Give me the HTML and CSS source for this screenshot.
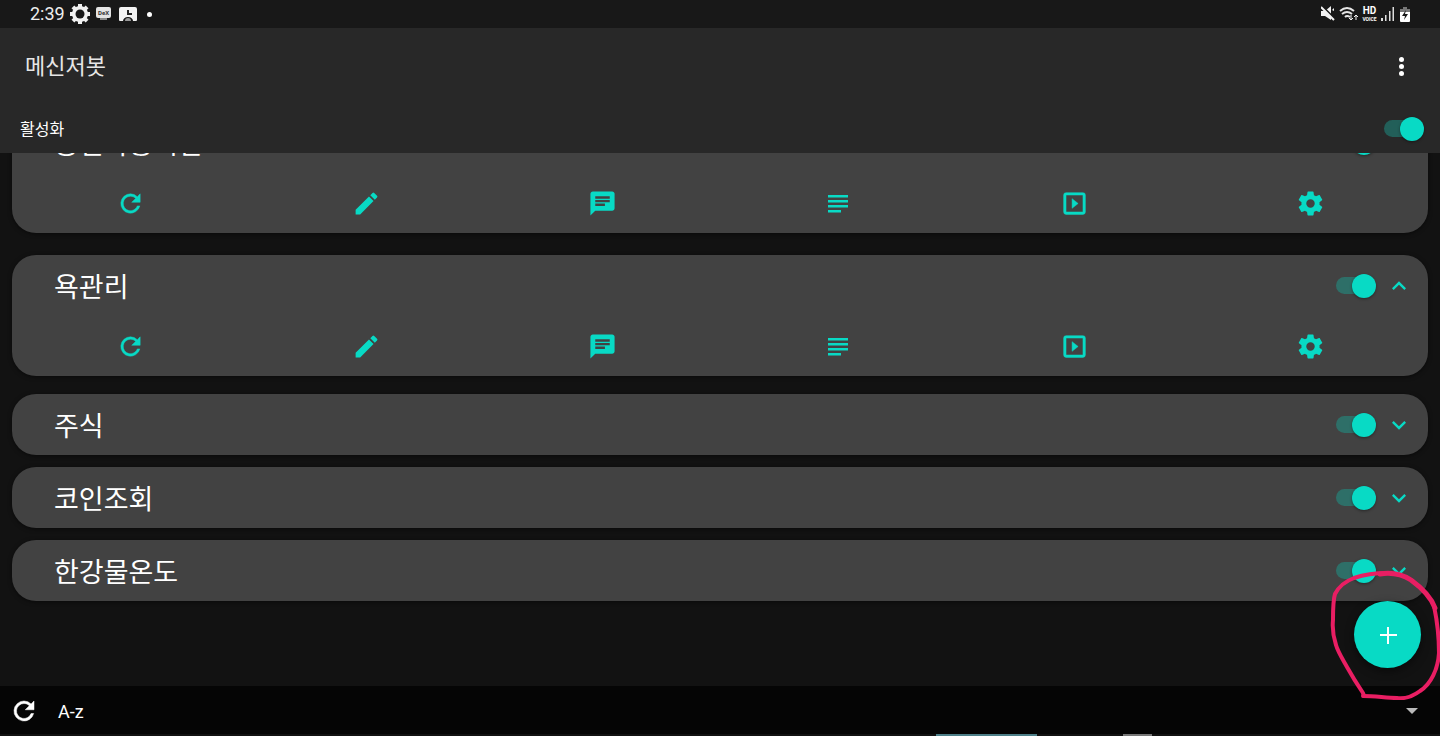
FILE: index.html
```
<!DOCTYPE html>
<html lang="ko">
<head>
  <meta charset="UTF-8" />
  <meta name="viewport" content="width=device-width, initial-scale=1.0"/>
  <title>메신저봇</title>
  <link rel="stylesheet" href="styles.css">
</head>
<body>
  <svg class="defs" aria-hidden="true">
    <symbol id="refresh" viewBox="0 0 24 24"><path d="M17.65 6.35A7.96 7.96 0 0 0 12 4a8 8 0 1 0 7.73 10h-2.08A6 6 0 1 1 12 6c1.66 0 3.14.69 4.22 1.78L13 11h7V4z" stroke="currentColor" stroke-width=".4"/></symbol>
    <symbol id="edit" viewBox="0 0 24 24"><path d="M3 17.25V21h3.75L17.81 9.94l-3.75-3.75zM20.71 7.04a1 1 0 0 0 0-1.41l-2.34-2.34a1 1 0 0 0-1.41 0l-1.83 1.83 3.75 3.75z"/></symbol>
    <symbol id="chat" viewBox="0 0 24 24"><path d="M20 2H4c-1.1 0-1.99.9-1.99 2L2 22l4-4h14c1.1 0 2-.9 2-2V4c0-1.1-.9-2-2-2zM6 9h12v2H6zm8 5H6v-2h8zm4-6H6V6h12z"/></symbol>
    <symbol id="log" viewBox="0 0 24 24"><path d="M2 4h20v2.500H2zm0 5h20v2.500H2zm0 5h20v2.500H2zm0 5h13v2.500H2z"/></symbol>
    <symbol id="run" viewBox="0 0 24 24"><path d="M10 8v8l5-4zm9-5H5a2 2 0 0 0-2 2v14a2 2 0 0 0 2 2h14a2 2 0 0 0 2-2V5a2 2 0 0 0-2-2zm0 16H5V5h14z" stroke="currentColor" stroke-width=".4"/></symbol>
    <symbol id="gear" viewBox="0 0 24 24"><path d="M19.43 12.98c.04-.32.07-.64.07-.98s-.03-.66-.07-.98l2.11-1.65c.19-.15.24-.42.12-.64l-2-3.46c-.12-.22-.39-.3-.61-.22l-2.49 1c-.52-.4-1.08-.73-1.69-.98l-.38-2.65A.49.49 0 0 0 14 2h-4c-.25 0-.46.18-.49.42l-.38 2.65c-.61.25-1.17.59-1.69.98l-2.49-1c-.23-.09-.49 0-.61.22l-2 3.46c-.13.22-.07.49.12.64l2.11 1.65c-.04.32-.07.65-.07.98s.03.66.07.98l-2.11 1.65c-.19.15-.24.42-.12.64l2 3.46c.12.22.39.3.61.22l2.49-1c.52.4 1.08.73 1.69.98l.38 2.65c.03.24.24.42.49.42h4c.25 0 .46-.18.49-.42l.38-2.65c.61-.25 1.17-.59 1.69-.98l2.49 1c.23.09.49 0 .61-.22l2-3.46c.12-.22.07-.49-.12-.64zM12 15.5a3.5 3.5 0 1 1 0-7 3.5 3.5 0 0 1 0 7z"/></symbol>
    <symbol id="down" viewBox="0 0 24 24"><path d="M7.41 8.59 12 13.17l4.59-4.58L18 10l-6 6-6-6z"/></symbol>
    <symbol id="up" viewBox="0 0 24 24"><path d="M7.41 15.41 12 10.83l4.59 4.58L18 14l-6-6-6 6z"/></symbol>
  </svg>

  <div class="status-bar">
    <span class="clock">2:39</span>
    <svg class="st-gear" viewBox="0 0 20 20">
      <g fill="#f2f2f2"><path d="M8 0h4v20H8z"/><path d="M8 0h4v20H8z" transform="rotate(45 10 10)"/><path d="M8 0h4v20H8z" transform="rotate(90 10 10)"/><path d="M8 0h4v20H8z" transform="rotate(135 10 10)"/><circle cx="10" cy="10" r="8"/></g>
      <circle cx="10" cy="10" r="4.500" fill="#181818"/>
    </svg>
    <svg class="st-dex" viewBox="0 0 16 14">
      <rect x="0" y="0" width="15" height="11" rx="2" fill="#e4e4e4"/>
      <path d="M4 11h7v2H4z" fill="#888"/>
      <text x="7.500" y="7.500" class="tiny">DeX</text>
    </svg>
    <svg class="st-clock" viewBox="0 0 18 15">
      <path d="M2 0h14a2 2 0 0 1 2 2v11a1 1 0 0 1-1 1h-3c0-2-2-4-5-4s-5 2-5 4H1a1 1 0 0 1-1-1V2a2 2 0 0 1 2-2z" fill="#f2f2f2"/>
      <path d="M9 3v4h4" fill="none" stroke="#222" stroke-width="2"/>
      <path d="M6 14a3 3 0 0 1 6 0z" fill="#999"/>
    </svg>
    <span class="dot"></span>
    <div class="status-right">
      <svg class="st-mute" viewBox="0 0 14 16"><path d="M0 5h4l6-5v14l-6-4H0zM11 4l2-2v3z" fill="#f2f2f2"/><path d="M1 0l13 13" stroke="#181818" stroke-width="2"/><path d="M0 1l13 13" stroke="#f2f2f2" stroke-width="2"/></svg>
      <svg class="st-wifi" viewBox="0 0 19 16"><g fill="none" stroke="#e6e6e6" stroke-width="2"><path d="M1 5q7-6 14 0M3 8q5-4 10 0M6 11q2-2 5 0"/></g><path d="M12 9v5m-2-2l2 2 2-2M17 14V9m-2 2l2-2 2 2" fill="none" stroke="#f2f2f2"/></svg>
      <span class="hd"><b>HD</b><small>VOICE</small></span>
      <svg class="st-signal" viewBox="0 0 14 14"><path d="M0 11h2v3H0zM4 8h1.500v6H4zM8 4h1.500v10H8zM11.500 0H13v14h-1.500z" fill="#ddd"/></svg>
      <svg class="st-battery" viewBox="0 0 10 15"><path d="M3 0h4v2h3v3H0V2h3z" fill="#777"/><path d="M0 5h10v9a1 1 0 0 1-1 1H1a1 1 0 0 1-1-1z" fill="#fff"/><path d="M6 3L2 9h3l-1 4 4-6H5z" fill="#181818"/></svg>
    </div>
  </div>

  <header>
    <div class="title-row">
      <h1>메신저봇</h1>
      <button class="more" aria-label="메뉴"><i></i><i></i><i></i></button>
    </div>
    <label class="power-row">
      <span>활성화</span>
      <input type="checkbox" class="switch" checked>
    </label>
  </header>

  <main id="list">
    <section class="card open">
      <div class="card-head">
        <label for="s1">공인사용시간</label>
        <input type="checkbox" class="switch" id="s1" checked>
        <button class="fold" aria-label="접기"><svg><use href="#up"/></svg></button>
      </div>
      <div class="actions">
        <button aria-label="새로고침"><svg><use href="#refresh"/></svg></button>
        <button aria-label="편집"><svg><use href="#edit"/></svg></button>
        <button aria-label="채팅"><svg><use href="#chat"/></svg></button>
        <button aria-label="로그"><svg class="small"><use href="#log"/></svg></button>
        <button aria-label="실행"><svg><use href="#run"/></svg></button>
        <button aria-label="설정"><svg><use href="#gear"/></svg></button>
      </div>
    </section>

    <section class="card open">
      <div class="card-head">
        <label for="s2">욕관리</label>
        <input type="checkbox" class="switch" id="s2" checked>
        <button class="fold" aria-label="접기"><svg><use href="#up"/></svg></button>
      </div>
      <div class="actions">
        <button aria-label="새로고침"><svg><use href="#refresh"/></svg></button>
        <button aria-label="편집"><svg><use href="#edit"/></svg></button>
        <button aria-label="채팅"><svg><use href="#chat"/></svg></button>
        <button aria-label="로그"><svg class="small"><use href="#log"/></svg></button>
        <button aria-label="실행"><svg><use href="#run"/></svg></button>
        <button aria-label="설정"><svg><use href="#gear"/></svg></button>
      </div>
    </section>

    <section class="card">
      <div class="card-head">
        <label for="s3">주식</label>
        <input type="checkbox" class="switch" id="s3" checked>
        <button class="fold" aria-label="펼치기"><svg><use href="#down"/></svg></button>
      </div>
    </section>

    <section class="card">
      <div class="card-head">
        <label for="s4">코인조회</label>
        <input type="checkbox" class="switch" id="s4" checked>
        <button class="fold" aria-label="펼치기"><svg><use href="#down"/></svg></button>
      </div>
    </section>

    <section class="card">
      <div class="card-head">
        <label for="s5">한강물온도</label>
        <input type="checkbox" class="switch" id="s5" checked>
        <button class="fold" aria-label="펼치기"><svg><use href="#down"/></svg></button>
      </div>
    </section>
  </main>

  <footer>
    <button class="reload" aria-label="새로고침"><svg><use href="#refresh"/></svg></button>
    <button class="sort">A-z</button>
    <button class="drop" aria-label="열기"><i></i></button>
  </footer>
  <div class="edge"></div>

  <button class="fab" aria-label="추가"><svg viewBox="0 0 24 24"><path d="M12 4v17M4 12h17"/></svg></button>

  <!-- hand drawn marker around the add button -->
  <svg class="marker" viewBox="0 0 110 130">
    <g fill="none" stroke="#e91e63" stroke-linecap="round" stroke-linejoin="round">
      <path stroke-width="4" d="M34 126L33 123C27 114 22 106 17 97C12 88 8 82 6 75C3 66 2 60 3 50C3 40 3 30 5 24C9 16 16 11 24 8C36 4 46 3 57 3"/>
      <path stroke-width="5" d="M50 4C62 2 73 5 81 10C92 18 101 27 105 38"/>
      <path stroke-width="4" d="M104 36C107 50 109 66 109 83C108 99 101 114 90 121C82 127 75 129 67 128C56 128 46 126 33 126"/>
    </g>
  </svg>

  <script>
    const list = document.getElementById('list');
    list.scrollTop = list.scrollHeight;
  </script>
</body>
</html>
```
FILE: styles.css
```
:root {
  --bg: #121212;
  --bar: #282828;
  --card: #424242;
  --accent: #08dac5;
}
* { box-sizing: border-box; }
body {
  margin: 0;
  height: 100vh;
  display: flex;
  flex-direction: column;
  overflow: hidden;
  background: var(--bg);
  color: #fff;
  font-family: Roboto, "Noto Sans CJK KR", sans-serif;
}
button {
  padding: 0;
  border: none;
  background: none;
  color: inherit;
  font: inherit;
  cursor: pointer;
}
svg { display: block; fill: currentColor; }
.defs { position: absolute; width: 0; height: 0; }

.status-bar {
  flex: none;
  height: 28px;
  padding: 0 30px;
  display: flex;
  align-items: center;
  background: #181818;
}
.clock { width: 40px; font-size: 18px; line-height: 28px; color: #eee; }
.st-gear { width: 20px; height: 20px; }
.st-dex { width: 16px; height: 14px; margin-left: 6px; }
.st-clock { width: 18px; height: 15px; margin-left: 7px; }
.tiny { font-size: 6px; font-weight: 700; text-anchor: middle; fill: #333; }
.dot {
  width: 5px;
  height: 5px;
  margin-left: 10px;
  border-radius: 50%;
  background: #fff;
}
.status-right {
  margin-left: auto;
  display: flex;
  align-items: center;
  gap: 4px;
}
.st-mute { width: 14px; height: 16px; }
.st-wifi { width: 19px; height: 16px; }
.hd { width: 15px; display: flex; flex-direction: column; align-items: center; }
.hd b { font-size: 10px; line-height: 10px; }
.hd small { font-size: 5px; line-height: 6px; font-weight: 700; }
.st-signal { width: 14px; height: 14px; }
.st-battery { width: 10px; height: 15px; margin-left: 1px; }

header { flex: none; background: var(--bar); }
.title-row {
  height: 76px;
  padding: 0 29px 0 25px;
  display: flex;
  align-items: center;
  justify-content: space-between;
}
h1 {
  margin: 0;
  padding-bottom: 4px;
  font-size: 22px;
  font-weight: 400;
  color: #e6e6e6;
}
.more {
  width: 20px;
  height: 30px;
  display: flex;
  flex-direction: column;
  align-items: center;
  justify-content: center;
  gap: 2px;
}
.more i { width: 5px; height: 5px; border-radius: 50%; background: #fff; }
.power-row {
  height: 49px;
  padding: 0 16px 0 20px;
  display: flex;
  align-items: center;
  justify-content: space-between;
  font-size: 16px;
}
.power-row span { padding-bottom: 2px; }

.switch {
  appearance: none;
  flex: none;
  width: 40px;
  height: 24px;
  margin: 0;
  display: flex;
  align-items: center;
  cursor: pointer;
}
.switch::before {
  content: "";
  width: 36px;
  height: 17px;
  border-radius: 9px;
  background: #2e6f68;
}
.switch::after {
  content: "";
  flex: none;
  width: 24px;
  height: 24px;
  margin-left: -20px;
  border-radius: 50%;
  background: var(--accent);
  box-shadow: 0 1px 3px rgba(0,0,0,0.4);
}
.power-row .switch::before { background: #225f59; }

main {
  flex: 1;
  min-height: 0;
  padding: 12px 12px 85px;
  overflow-y: auto;
  scrollbar-width: none;
}
.card {
  margin-bottom: 12px;
  border-radius: 24px;
  background: var(--card);
  box-shadow: 0 1px 4px rgba(0,0,0,0.5);
}
.card:last-child { margin-bottom: 0; }
.card.open { margin-bottom: 18px; }
.card.open:first-child { margin-bottom: 22px; }
.card-head {
  height: 61px;
  padding: 0 15px 0 42px;
  display: flex;
  align-items: center;
}
.card-head label {
  flex: 1;
  padding-top: 4px;
  font-size: 27px;
  line-height: 40px;
}
.fold { margin-left: 9px; color: var(--accent); }
.fold svg { width: 28px; height: 28px; }
.actions {
  height: 60px;
  display: grid;
  grid-template-columns: repeat(6, 1fr);
  justify-items: center;
  color: var(--accent);
}
.actions button { display: flex; align-items: center; }
.actions svg { width: 29px; height: 29px; }
.actions .small { width: 24px; height: 24px; }

footer {
  flex: none;
  height: 48px;
  padding: 2px 22px 0 9px;
  display: flex;
  align-items: center;
  background: #050505;
}
.reload svg { width: 30px; height: 30px; }
.sort { margin-left: 19px; font-size: 18px; }
.drop { margin-left: auto; }
.drop i {
  display: block;
  border: 6px solid transparent;
  border-top-color: #bbb;
  border-bottom: none;
}
.edge {
  flex: none;
  height: 2px;
  background: linear-gradient(90deg, #111 0 65%, #4d7f88 65% 72%, #111 72% 78%, #777 78% 80%, #111 80%);
}

.fab {
  position: absolute;
  right: 19px;
  bottom: 68px;
  width: 67px;
  height: 67px;
  border-radius: 50%;
  background: var(--accent);
  box-shadow: 0 3px 8px rgba(0,0,0,0.5);
  display: flex;
  align-items: center;
  justify-content: center;
}
.fab svg { width: 24px; height: 24px; fill: none; stroke: #fff; stroke-width: 2; }
.marker {
  position: absolute;
  right: 0;
  bottom: 36px;
  width: 110px;
  height: 130px;
  pointer-events: none;
}
```
